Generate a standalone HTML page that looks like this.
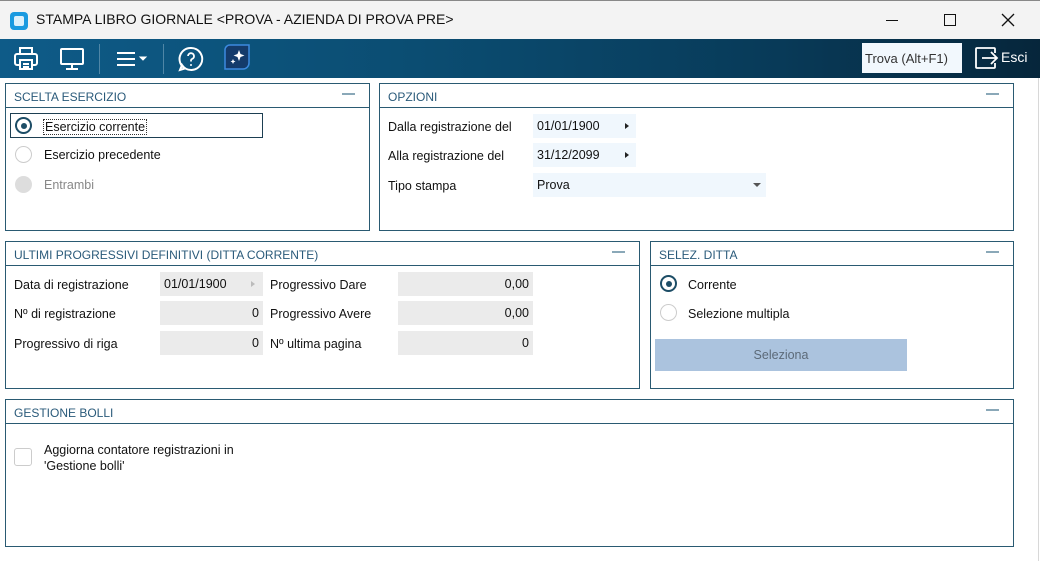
<!DOCTYPE html>
<html><head><meta charset="utf-8"><style>
*{margin:0;padding:0;box-sizing:border-box}
body{width:1040px;height:561px;background:#fff;font-family:"Liberation Sans",sans-serif;font-size:13px;color:#111;position:relative;overflow:hidden}
.abs{position:absolute}
.title{top:0;left:0;width:1040px;height:39px;background:#f3f3f3;border-top:1px solid #888}
.tb{top:39px;left:0;width:1040px;height:39px;background:linear-gradient(90deg,#0e5b88 0%,#0b4d72 40%,#083a58 75%,#06263b 100%)}
.panel{position:absolute;border:1px solid #2a5a72;background:#fff}
.ph{height:24px;border-bottom:1px solid #2a5a72;color:#2a5a7a;font-size:12px;padding:6px 0 0 8px;position:relative}
.ph:after{content:"";position:absolute;right:14px;top:9px;width:13px;height:2px;background:#8aa8b8}
.lbl{position:absolute;font-size:12.5px}
.fld{position:absolute;height:24px;background:#f0f7fd;font-size:12.5px;padding:5px 4px}
.gf{position:absolute;height:24px;background:#ebebeb;font-size:12.5px;padding:5px 4px;text-align:right}
.rad{position:absolute;width:17px;height:17px;border-radius:50%;border:1.5px solid #ccc;background:#fff}
.rad.on{border:2px solid #1d4d66}
.rad.on:after{content:"";position:absolute;left:3.5px;top:3.5px;width:6px;height:6px;border-radius:50%;background:#1d4d66}
.tri{position:absolute;width:0;height:0;border-top:3.5px solid transparent;border-bottom:3.5px solid transparent;border-left:4px solid #222}
</style></head><body>
<div class="abs title">
  <div class="abs" style="left:10px;top:11px;width:18px;height:18px;border-radius:4px;background:#1a9ae0"><div style="position:absolute;left:4px;top:4px;width:10px;height:10px;border-radius:2px;background:#fff;opacity:.85"></div></div>
  <div class="abs" style="left:36px;top:10px;font-size:14px;color:#111">STAMPA LIBRO GIORNALE &lt;PROVA - AZIENDA DI PROVA PRE&gt;</div>
  <div class="abs" style="left:886px;top:19px;width:12px;height:1px;background:#111"></div>
  <div class="abs" style="left:944px;top:13px;width:12px;height:12px;border:1.2px solid #111"></div>
  <svg class="abs" style="left:1001px;top:12px" width="14" height="14"><path d="M1 1L13 13M13 1L1 13" stroke="#111" stroke-width="1.3"/></svg>
</div>
<div class="abs tb">
  <svg class="abs" style="left:13px;top:7px" width="26" height="26" fill="none" stroke="#fff" stroke-width="2"><rect x="7" y="2" width="12" height="6"/><rect x="2" y="8" width="22" height="11" rx="2"/><rect x="7" y="14" width="12" height="9" fill="#0e5b88"/><path d="M10 18h6M10 21h6"/></svg>
  <svg class="abs" style="left:59px;top:8px" width="26" height="24" fill="none" stroke="#fff" stroke-width="2"><rect x="2" y="2" width="22" height="15" rx="1"/><path d="M13 17v4M7 22h12"/></svg>
  <div class="abs" style="left:99px;top:5px;width:1px;height:30px;background:#4f86a6"></div>
  <svg class="abs" style="left:115px;top:12px" width="36" height="16" fill="none" stroke="#fff" stroke-width="2"><path d="M2 2h18M2 8h18M2 14h18"/><path d="M25 6l3 3 3-3z" fill="#fff" stroke-width="1"/></svg>
  <div class="abs" style="left:163px;top:5px;width:1px;height:30px;background:#4f86a6"></div>
  <svg class="abs" style="left:178px;top:7px" width="26" height="26" fill="none" stroke="#fff" stroke-width="2"><path d="M13 2a11 11 0 1 1-9 17l-2 5 5-1.5A11 11 0 0 1 13 2z"/><path d="M10 10a3 3 0 1 1 4 3c-1 .5-1 1-1 2.5" stroke-width="1.8"/><circle cx="13" cy="19" r="1" fill="#fff" stroke="none"/></svg>
  <svg class="abs" style="left:224px;top:5px" width="26" height="26"><path d="M6 1h19v18a6 6 0 0 1-6 6H1V6a5 5 0 0 1 5-5z" fill="#143b6b" stroke="#3c8ae0" stroke-width="1.5"/><path d="M15 6l1.5 4 4 1.5-4 1.5-1.5 4-1.5-4-4-1.5 4-1.5z" fill="#fff"/><path d="M9 15l.8 1.7 1.7.8-1.7.8L9 20l-.8-1.7-1.7-.8 1.7-.8z" fill="#fff"/></svg>
  <div class="abs" style="left:862px;top:4px;width:100px;height:30px;background:#f2f8fd;color:#333;font-size:13px;padding:8px 0 0 3px">Trova (Alt+F1)</div>
  <svg class="abs" style="left:974px;top:7px" width="26" height="24" fill="none" stroke="#fff" stroke-width="1.8"><path d="M9 2H3a1 1 0 0 0-1 1v18a1 1 0 0 0 1 1h6M9 2h11a1 1 0 0 1 1 1v4M9 22h11a1 1 0 0 0 1-1v-4"/><path d="M8 12h15M17 6l6 6-6 6"/></svg>
  <div class="abs" style="left:1001px;top:10px;color:#fff;font-size:14px">Esci</div>
</div>
<div class="abs" style="left:1038px;top:78px;width:1px;height:483px;background:#d8d8d8"></div>

<div class="panel" style="left:5px;top:83px;width:365px;height:148px">
  <div class="ph">SCELTA ESERCIZIO</div>
  <div class="abs" style="left:4px;top:29px;width:253px;height:25px;border:1.5px solid #1d3f52"></div>
  <div class="rad on" style="left:9px;top:33px"></div><div class="lbl" style="left:37px;top:35px;border:1px dotted #333;padding:0 1px">Esercizio corrente</div>
  <div class="rad" style="left:9px;top:62px"></div><div class="lbl" style="left:38px;top:64px">Esercizio precedente</div>
  <div class="rad" style="left:9px;top:92px;background:#ddd;border-color:#ddd"></div><div class="lbl" style="left:38px;top:94px;color:#888">Entrambi</div>
</div>

<div class="panel" style="left:379px;top:83px;width:635px;height:148px">
  <div class="ph">OPZIONI</div>
  <div class="lbl" style="left:8px;top:36px">Dalla registrazione del</div>
  <div class="fld" style="left:153px;top:30px;width:103px">01/01/1900</div><div class="tri" style="left:245px;top:39px"></div>
  <div class="lbl" style="left:8px;top:65px">Alla registrazione del</div>
  <div class="fld" style="left:153px;top:59px;width:103px">31/12/2099</div><div class="tri" style="left:245px;top:68px"></div>
  <div class="lbl" style="left:8px;top:95px">Tipo stampa</div>
  <div class="fld" style="left:153px;top:89px;width:233px">Prova</div>
  <div class="abs" style="left:373px;top:99px;border-left:4px solid transparent;border-right:4px solid transparent;border-top:4px solid #555"></div>
</div>

<div class="panel" style="left:5px;top:241px;width:635px;height:148px">
  <div class="ph">ULTIMI PROGRESSIVI DEFINITIVI (DITTA CORRENTE)</div>
  <div class="lbl" style="left:8px;top:36px">Data di registrazione</div>
  <div class="gf" style="left:154px;top:30px;width:103px;text-align:left">01/01/1900</div><div class="tri" style="left:245px;top:39px;border-left-color:#bbb"></div>
  <div class="lbl" style="left:8px;top:65px">Nº di registrazione</div>
  <div class="gf" style="left:154px;top:59px;width:103px">0</div>
  <div class="lbl" style="left:8px;top:95px">Progressivo di riga</div>
  <div class="gf" style="left:154px;top:89px;width:103px">0</div>
  <div class="lbl" style="left:264px;top:36px">Progressivo Dare</div>
  <div class="gf" style="left:392px;top:30px;width:135px">0,00</div>
  <div class="lbl" style="left:264px;top:65px">Progressivo Avere</div>
  <div class="gf" style="left:392px;top:59px;width:135px">0,00</div>
  <div class="lbl" style="left:264px;top:95px">Nº ultima pagina</div>
  <div class="gf" style="left:392px;top:89px;width:135px">0</div>
</div>

<div class="panel" style="left:650px;top:241px;width:364px;height:148px">
  <div class="ph">SELEZ. DITTA</div>
  <div class="rad on" style="left:9px;top:33px"></div><div class="lbl" style="left:37px;top:36px">Corrente</div>
  <div class="rad" style="left:9px;top:62px"></div><div class="lbl" style="left:37px;top:65px">Selezione multipla</div>
  <div class="abs" style="left:4px;top:97px;width:252px;height:32px;background:#abc3de;color:#5c6a78;font-size:12.5px;text-align:center;padding-top:9px">Seleziona</div>
</div>

<div class="panel" style="left:5px;top:399px;width:1009px;height:148px">
  <div class="ph">GESTIONE BOLLI</div>
  <div class="abs" style="left:8px;top:48px;width:18px;height:18px;border:1.5px solid #ccc;border-radius:3px"></div>
  <div class="lbl" style="left:38px;top:42px;line-height:16px">Aggiorna contatore registrazioni in<br>'Gestione bolli'</div>
</div>
</body></html>
